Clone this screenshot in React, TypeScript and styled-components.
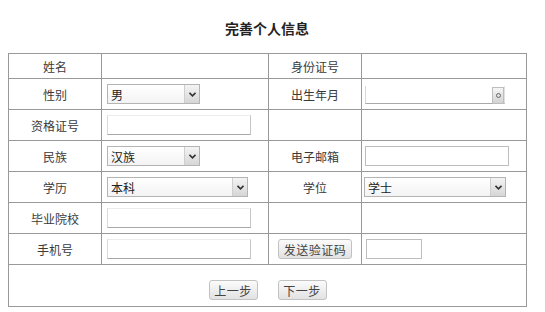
import styled, { createGlobalStyle } from 'styled-components';

const GlobalStyle = createGlobalStyle`
  body {
    margin: 0;
    background: #ffffff;
    font-family: "Noto Sans CJK SC", "Liberation Sans", sans-serif;
    color: #333333;
  }
`;

const Page = styled.div`
  width: 545px;
  padding: 0 8px;
  box-sizing: border-box;
`;

const Title = styled.h2`
  margin: 0;
  padding: 18px 0 15px;
  height: 20px;
  line-height: 20px;
  box-sizing: content-box;
  text-align: center;
  font-size: 14px;
  font-weight: bold;
  color: #222222;
  width: 518px;
`;

const FormTable = styled.table`
  width: 518px;
  border-collapse: collapse;
  table-layout: fixed;
  border: 1px solid #8c8c8c;
  font-size: 12px;
`;

const Row = styled.tr<{ $h?: number }>`
  height: ${(p) => p.$h ?? 31}px;
`;

const Label = styled.td`
  border: 1px solid #999999;
  text-align: center;
  color: #3a3a3a;
  padding: 0;
`;

const Field = styled.td<{ $pad?: number }>`
  border: 1px solid #999999;
  padding: 0 0 0 ${(p) => p.$pad ?? 5}px;
  text-align: left;
`;

const FooterCell = styled.td`
  border: 1px solid #999999;
  text-align: center;
  padding-top: 10px;
`;

const SelectWrap = styled.span<{ $w: number }>`
  display: inline-flex;
  vertical-align: middle;
  width: ${(p) => p.$w}px;
  height: 20px;
  box-sizing: border-box;
  border: 1px solid #b4b4b4;
  background: linear-gradient(#ffffff, #f3f3f3);
`;

const NativeSelect = styled.select`
  flex: 1;
  min-width: 0;
  appearance: none;
  border: none;
  outline: none;
  background: transparent;
  font-family: inherit;
  font-size: 12px;
  color: #222222;
  padding: 0 3px;
  margin: 0;
`;

const ArrowBox = styled.span`
  width: 14px;
  display: flex;
  align-items: center;
  justify-content: center;
  border-left: 1px solid #cfcfcf;
  background: linear-gradient(#f4f4f4, #d6d6d6);
`;

const TextInput = styled.input<{ $w: number; $full?: boolean }>`
  width: ${(p) => p.$w}px;
  height: 20px;
  box-sizing: border-box;
  vertical-align: middle;
  margin: 0;
  padding: 0 3px;
  font-family: inherit;
  font-size: 12px;
  outline: none;
  background: #ffffff;
  border: 1px solid;
  border-color: ${(p) =>
    p.$full ? '#bdbdbd' : '#ececec #c6c6c6 #a8a8a8 #dadada'};
`;

const DateWrap = styled.span`
  display: inline-flex;
  vertical-align: middle;
  width: 140px;
  height: 18px;
  box-sizing: border-box;
  border-bottom: 1px solid #a8a8a8;
  border-left: 1px solid #d8d8d8;
  border-right: 1px solid #e0e0e0;
`;

const DateInput = styled.input`
  flex: 1;
  min-width: 0;
  border: none;
  outline: none;
  padding: 0 3px;
  font-size: 12px;
  background: transparent;
`;

const CalIcon = styled.span`
  width: 10px;
  height: 15px;
  align-self: flex-start;
  margin-top: 1px;
  border: 1px solid #bdbdbd;
  background: linear-gradient(#f6f6f6, #d2d2d2);
  display: flex;
  align-items: center;
  justify-content: center;
  &::after {
    content: '';
    width: 3px;
    height: 3px;
    border-radius: 50%;
    border: 1px solid #666666;
  }
`;

const Btn = styled.button<{ $w: number }>`
  width: ${(p) => p.$w}px;
  height: 20px;
  padding: 0;
  margin: 0;
  vertical-align: middle;
  font-family: inherit;
  font-size: 12px;
  color: #444444;
  letter-spacing: 0.5px;
  border: 1px solid #c2c2c2;
  border-radius: 3px;
  background: linear-gradient(#fbfbfb, #e2e2e2);
`;

const ButtonRow = styled.div`
  display: flex;
  justify-content: center;
  gap: 20px;
`;

const Chevron = () => (
  <svg width="7" height="5" viewBox="0 0 7 5">
    <path d="M0.5 0.8 L3.5 3.8 L6.5 0.8" fill="none" stroke="#333" strokeWidth="1.6" />
  </svg>
);

const Select = ({ width, value }: { width: number; value: string }) => (
  <SelectWrap $w={width}>
    <NativeSelect defaultValue={value}>
      <option>{value}</option>
    </NativeSelect>
    <ArrowBox>
      <Chevron />
    </ArrowBox>
  </SelectWrap>
);

export default function App() {
  return (
    <Page>
      <GlobalStyle />
      <Title>完善个人信息</Title>
      <FormTable>
        <colgroup>
          <col style={{ width: 93 }} />
          <col style={{ width: 167 }} />
          <col style={{ width: 93 }} />
          <col style={{ width: 165 }} />
        </colgroup>
        <tbody>
          <Row $h={25}>
            <Label>姓名</Label>
            <Field />
            <Label>身份证号</Label>
            <Field />
          </Row>
          <Row>
            <Label>性别</Label>
            <Field>
              <Select width={93} value="男" />
            </Field>
            <Label>出生年月</Label>
            <Field $pad={3}>
              <DateWrap>
                <DateInput />
                <CalIcon />
              </DateWrap>
            </Field>
          </Row>
          <Row>
            <Label>资格证号</Label>
            <Field>
              <TextInput $w={144} />
            </Field>
            <Label />
            <Field />
          </Row>
          <Row>
            <Label>民族</Label>
            <Field>
              <Select width={93} value="汉族" />
            </Field>
            <Label>电子邮箱</Label>
            <Field $pad={3}>
              <TextInput $w={144} $full />
            </Field>
          </Row>
          <Row>
            <Label>学历</Label>
            <Field>
              <Select width={141} value="本科" />
            </Field>
            <Label>学位</Label>
            <Field $pad={2}>
              <Select width={142} value="学士" />
            </Field>
          </Row>
          <Row>
            <Label>毕业院校</Label>
            <Field>
              <TextInput $w={144} />
            </Field>
            <Label />
            <Field />
          </Row>
          <Row>
            <Label>手机号</Label>
            <Field>
              <TextInput $w={144} />
            </Field>
            <Label>
              <Btn $w={74}>发送验证码</Btn>
            </Label>
            <Field $pad={4}>
              <TextInput $w={56} $full />
            </Field>
          </Row>
          <Row $h={42}>
            <FooterCell colSpan={4}>
              <ButtonRow>
                <Btn $w={49}>上一步</Btn>
                <Btn $w={49}>下一步</Btn>
              </ButtonRow>
            </FooterCell>
          </Row>
        </tbody>
      </FormTable>
    </Page>
  );
}
